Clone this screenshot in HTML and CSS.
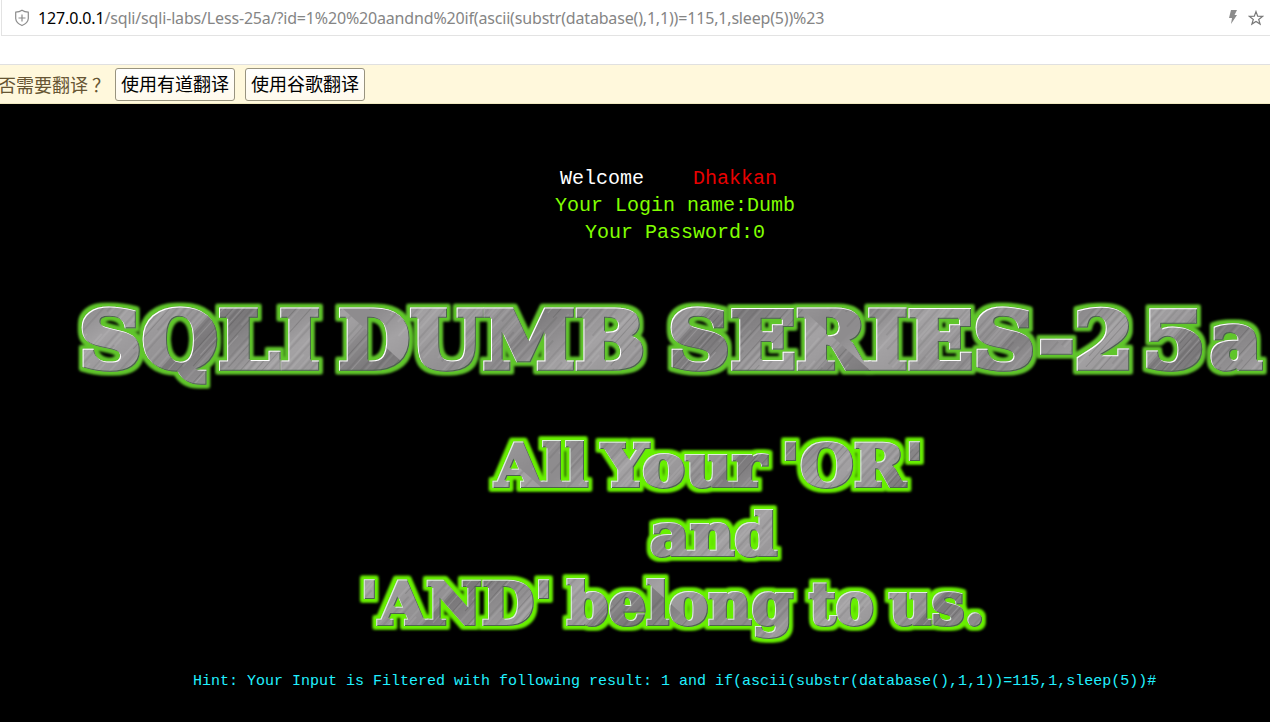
FILE: index.html
```html
<!DOCTYPE html>
<html lang="zh">
<head>
<meta charset="utf-8">
<title>Less-25a</title>
<link rel="stylesheet" href="styles.css">
</head>
<body>
<header class="address">
  <svg class="shield" width="16" height="18" viewBox="0 0 16 18"><path d="M8 1.2 Q10.5 3 14.3 3.2 V9.5 Q14 14 8 16.5 Q2 14 1.7 9.5 V3.2 Q5.5 3 8 1.2Z M8 5.5v7 M4.5 9h7"/></svg>
  <div class="url"><span class="host">127.0.0.1</span><span class="path">/sqli/sqli-labs/Less-25a/?id=1%20%20aandnd%20if(ascii(substr(database(),1,1))=115,1,sleep(5))%23</span></div>
  <svg class="bolt" width="10" height="15" viewBox="0 0 10 15"><path d="M3 0h6L6.5 5H9L3 14 4 8H1Z"/></svg>
  <svg class="star" width="16" height="16" viewBox="0 0 16 16"><path d="M8 1.6l1.7 4.6 4.9.2-3.9 3 1.4 4.7L8 11.4l-4.1 2.7 1.4-4.7-3.9-3 4.9-.2Z"/></svg>
</header>
<div class="translate">
  <span class="ask">否需要翻译<span class="mark">？</span></span>
  <button class="choice">使用有道翻译</button>
  <button class="choice">使用谷歌翻译</button>
</div>
<main class="page">
  <div class="login">
    <div class="welcome"><span class="white">Welcome</span><span class="red">Dhakkan</span></div>
    <div>Your Login name:Dumb</div>
    <div>Your Password:0</div>
  </div>
  <svg class="banner" width="1270" height="370" viewBox="0 290 1270 370">
    <defs>
      <linearGradient id="sheen" x1="0" x2="1" y1="0" y2="0.6">
        <stop offset="0" stop-color="#8e8c8e"/><stop offset=".25" stop-color="#7a787a"/>
        <stop offset=".6" stop-color="#a4a2a4"/><stop offset="1" stop-color="#8e8c8e"/>
      </linearGradient>
      <pattern id="brushed" width="122" height="307" patternUnits="userSpaceOnUse" patternTransform="rotate(42)">
        <rect width="122" height="307" fill="url(#sheen)"/>
        <g fill="none" stroke="#fff" stroke-opacity=".2" stroke-width=".8">
          <path d="M2 0v90M6.5 40v133M11 0v60M15 70v80M20.5 10v120M26 100v73M31 20v60M35.5 90v70M41 0v80M47 50v110M52 10v70M58 130v120M63 0v110M69 60v140M73 170v90M80 20v80M86 120v150M91 0v90M97 60v170M103 10v100M109 150v120M115 30v110"/>
          <path d="M4 180v100M13 190v90M23 160v120M33 200v90M44 190v80M55 180v110M66 210v80M77 190v90M89 200v90M100 240v60M112 180v70M119 60v160"/>
        </g>
        <g fill="none" stroke="#222" stroke-opacity=".22" stroke-width=".8">
          <path d="M3 30v120M8.5 0v80M13.5 60v113M18 0v95M22.5 60v83M28 20v90M33.5 70v90M38 0v70M44 60v100M49.5 0v120M55 70v90M60.5 10v110M66 50v140M71.5 0v150M76.5 70v90M83 30v130M88.5 110v60M94 0v140M100 90v120M106 0v110M112 40v130M118 0v50"/>
          <path d="M6 190v90M16 170v120M29 190v80M39 160v120M50 200v90M61 190v110M72 180v90M82 210v70M93 170v120M105 190v90M116 210v80"/>
        </g>
      </pattern>
      <filter id="metal" filterUnits="userSpaceOnUse" x="0" y="290" width="1270" height="370" color-interpolation-filters="sRGB">
        <feMorphology in="SourceAlpha" operator="dilate" radius="3" result="wide"/>
        <feGaussianBlur in="wide" stdDeviation="1.7" result="soft"/>
        <feFlood flood-color="#60c52b"/>
        <feComposite in2="soft" operator="in" result="glow"/>
        <feOffset in="SourceAlpha" dx="1" dy="1" result="low"/>
        <feComposite in="SourceAlpha" in2="low" operator="out" result="lit"/>
        <feFlood flood-color="#ffffff"/>
        <feComposite in2="lit" operator="in" result="light"/>
        <feOffset in="SourceAlpha" dx="-1" dy="-1" result="high"/>
        <feComposite in="SourceAlpha" in2="high" operator="out" result="shade"/>
        <feFlood flood-color="#4c654c"/>
        <feComposite in2="shade" operator="in" result="dark"/>
        <feMerge><feMergeNode in="glow"/><feMergeNode in="glow"/><feMergeNode in="SourceGraphic"/><feMergeNode in="dark"/><feMergeNode in="light"/></feMerge>
      </filter>
      <filter id="metal-bright" filterUnits="userSpaceOnUse" x="0" y="290" width="1270" height="370" color-interpolation-filters="sRGB">
        <feMorphology in="SourceAlpha" operator="dilate" radius="3" result="wide"/>
        <feGaussianBlur in="wide" stdDeviation="1.7" result="soft"/>
        <feFlood flood-color="#68f000"/>
        <feComposite in2="soft" operator="in" result="glow"/>
        <feOffset in="SourceAlpha" dx="1" dy="1" result="low"/>
        <feComposite in="SourceAlpha" in2="low" operator="out" result="lit"/>
        <feFlood flood-color="#e0f0e0"/>
        <feComposite in2="lit" operator="in" result="light"/>
        <feOffset in="SourceAlpha" dx="-1" dy="-1" result="high"/>
        <feComposite in="SourceAlpha" in2="high" operator="out" result="shade"/>
        <feFlood flood-color="#4c654c"/>
        <feComposite in2="shade" operator="in" result="dark"/>
        <feMerge><feMergeNode in="glow"/><feMergeNode in="glow"/><feMergeNode in="SourceGraphic"/><feMergeNode in="dark"/><feMergeNode in="light"/></feMerge>
      </filter>
    </defs>
    <g class="series" filter="url(#metal)">
      <text x="79" y="368" textLength="241" lengthAdjust="spacingAndGlyphs">SQLI</text>
      <text x="338" y="368" textLength="307" lengthAdjust="spacingAndGlyphs">DUMB</text>
      <text x="668" y="368" textLength="466" lengthAdjust="spacingAndGlyphs">SERIES-2</text>
      <text x="1142" y="368" textLength="64" lengthAdjust="spacingAndGlyphs">5</text>
      <text x="1210" y="368" textLength="52" lengthAdjust="spacingAndGlyphs">a</text>
    </g>
    <g class="slogan" filter="url(#metal-bright)">
      <text x="495" y="486" textLength="93" lengthAdjust="spacingAndGlyphs">All</text>
      <text x="602" y="486" textLength="164" lengthAdjust="spacingAndGlyphs">Your</text>
      <text x="781" y="486" textLength="143" lengthAdjust="spacingAndGlyphs">'OR'</text>
      <text x="650" y="555" textLength="127" lengthAdjust="spacingAndGlyphs">and</text>
      <text x="360" y="624" textLength="193" lengthAdjust="spacingAndGlyphs">'AND'</text>
      <text x="567" y="624" textLength="226" lengthAdjust="spacingAndGlyphs">belong</text>
      <text x="809" y="624" textLength="65" lengthAdjust="spacingAndGlyphs">to</text>
      <text x="889" y="624" textLength="96" lengthAdjust="spacingAndGlyphs">us.</text>
    </g>
  </svg>
  <div class="hint">Hint: Your Input is Filtered with following result: 1 and if(ascii(substr(database(),1,1))=115,1,sleep(5))#</div>
</main>
</body>
</html>
```
FILE: styles.css
```css
* { box-sizing: border-box; }
body { margin: 0; width: 1270px; height: 722px; overflow: hidden; background: #fff; }
.address {
  display: flex; align-items: center; height: 36px; padding: 0 6px 0 12px;
  border-bottom: 1px solid #e3e3e3; border-left: 1px solid #e3e3e3; margin-left: 1px;
}
.shield { flex: none; margin-right: 8px; fill: none; stroke: #8c8c8c; stroke-width: 1.2; }
.url { flex: 1; white-space: nowrap; font: 16px/34px "Noto Sans", sans-serif; color: #858585; }
.host { color: #000; letter-spacing: -0.15px; }
.path { letter-spacing: -0.17px; }
.bolt { fill: #8c8c8c; margin-right: 10px; }
.star { fill: none; stroke: #777; stroke-width: 1.2; }
.translate {
  display: flex; align-items: center; height: 40px; margin-top: 28px;
  background: #fff8dc; border-top: 1px solid #e0e0e0; border-bottom: 1px solid #f0e9c0;
  font: 18px/26px "Noto Sans CJK SC", sans-serif;
}
.ask { width: 117px; margin-left: -2px; color: #665533; white-space: nowrap; }
.mark { margin-left: 4px; }
.choice {
  width: 120px; height: 33px; margin-right: 10px; padding: 0 0 2px; border: 1px solid #98937f;
  border-radius: 3px; background: linear-gradient(#fff, #fffaec); color: #000;
  font: 18px/28px "Noto Sans CJK SC", sans-serif; white-space: nowrap;
}
.page { display: flow-root; height: 618px; background: #000; }
.login {
  width: 240px; margin: 61px 0 0 555px; text-align: center; white-space: nowrap;
  font: 20px/27px "Liberation Mono", monospace; color: #80ff00;
}
.welcome { display: flex; gap: 49px; padding-left: 5px; }
.white { color: #fff; }
.red { color: #e80000; }
.banner { display: block; margin-top: 44px; }
.banner text {
  font-family: "DejaVu Serif", serif; font-weight: bold;
  fill: url(#brushed); stroke: url(#brushed);
}
.series { font-size: 78px; stroke-width: 5.5px; }
.slogan { font-size: 58px; stroke-width: 3.8px; }
.hint {
  width: 964px; margin: 12px 0 0 193px; white-space: nowrap;
  font: 15px/20px "Liberation Mono", monospace; color: #20f0ff;
}
```
